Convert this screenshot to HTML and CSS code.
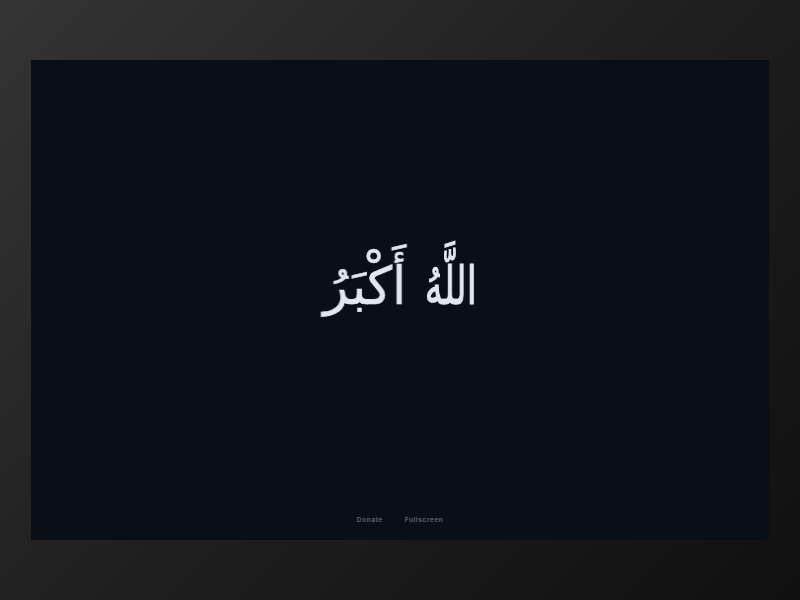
FILE: index.html
```html
<!DOCTYPE html>
<html lang="ar">
<head>
  <meta charset="UTF-8" />
  <meta name="viewport" content="width=device-width, initial-scale=1.0"/>
  <title>Takbir</title>
  <link rel="stylesheet" href="styles.css">
</head>
<body>
  <div class="screen">
    <main class="phrase-wrap">
      <h1 class="phrase" dir="rtl">
        <span class="word word-allah">اللَّهُ</span>
        <span class="word word-akbar">أَكْبَرُ</span>
      </h1>
    </main>
    <footer class="links" lang="en">
      <a class="link" href="#">Donate</a>
      <a class="link" href="#">Fullscreen</a>
    </footer>
  </div>
</body>
</html>
```

FILE: styles.css
```css
html, body {
  height: 100%;
}

body {
  margin: 0;
  padding: 60px 31px;
  box-sizing: border-box;
  background: linear-gradient(135deg, #343434 0%, #1f1f1f 50%, #101010 100%);
  font-family: "DejaVu Sans", sans-serif;
}

.screen {
  height: 100%;
  display: flex;
  flex-direction: column;
  background-color: #0a0e17;
}

.phrase-wrap {
  flex: 1;
  display: flex;
  align-items: center;
  justify-content: center;
}

.phrase {
  margin: 0;
  padding: 0 0 4px 11px;
  display: flex;
  gap: 7px;
  font-size: 52px;
  font-weight: normal;
  color: #e2e6ee;
}

.word {
  will-change: transform;
}

.word-allah {
  -webkit-text-stroke: 1.1px #e2e6ee;
  transform: scaleX(0.69);
}

.word-akbar {
  -webkit-text-stroke: 0.6px #e2e6ee;
  transform: scaleX(0.99);
}

.links {
  display: flex;
  justify-content: center;
  gap: 22px;
  padding-bottom: 16px;
}

.link {
  font-family: "Inter", sans-serif;
  font-size: 6.5px;
  font-weight: 700;
  letter-spacing: 0.55px;
  color: #5a5e67;
  text-decoration: none;
}
```
